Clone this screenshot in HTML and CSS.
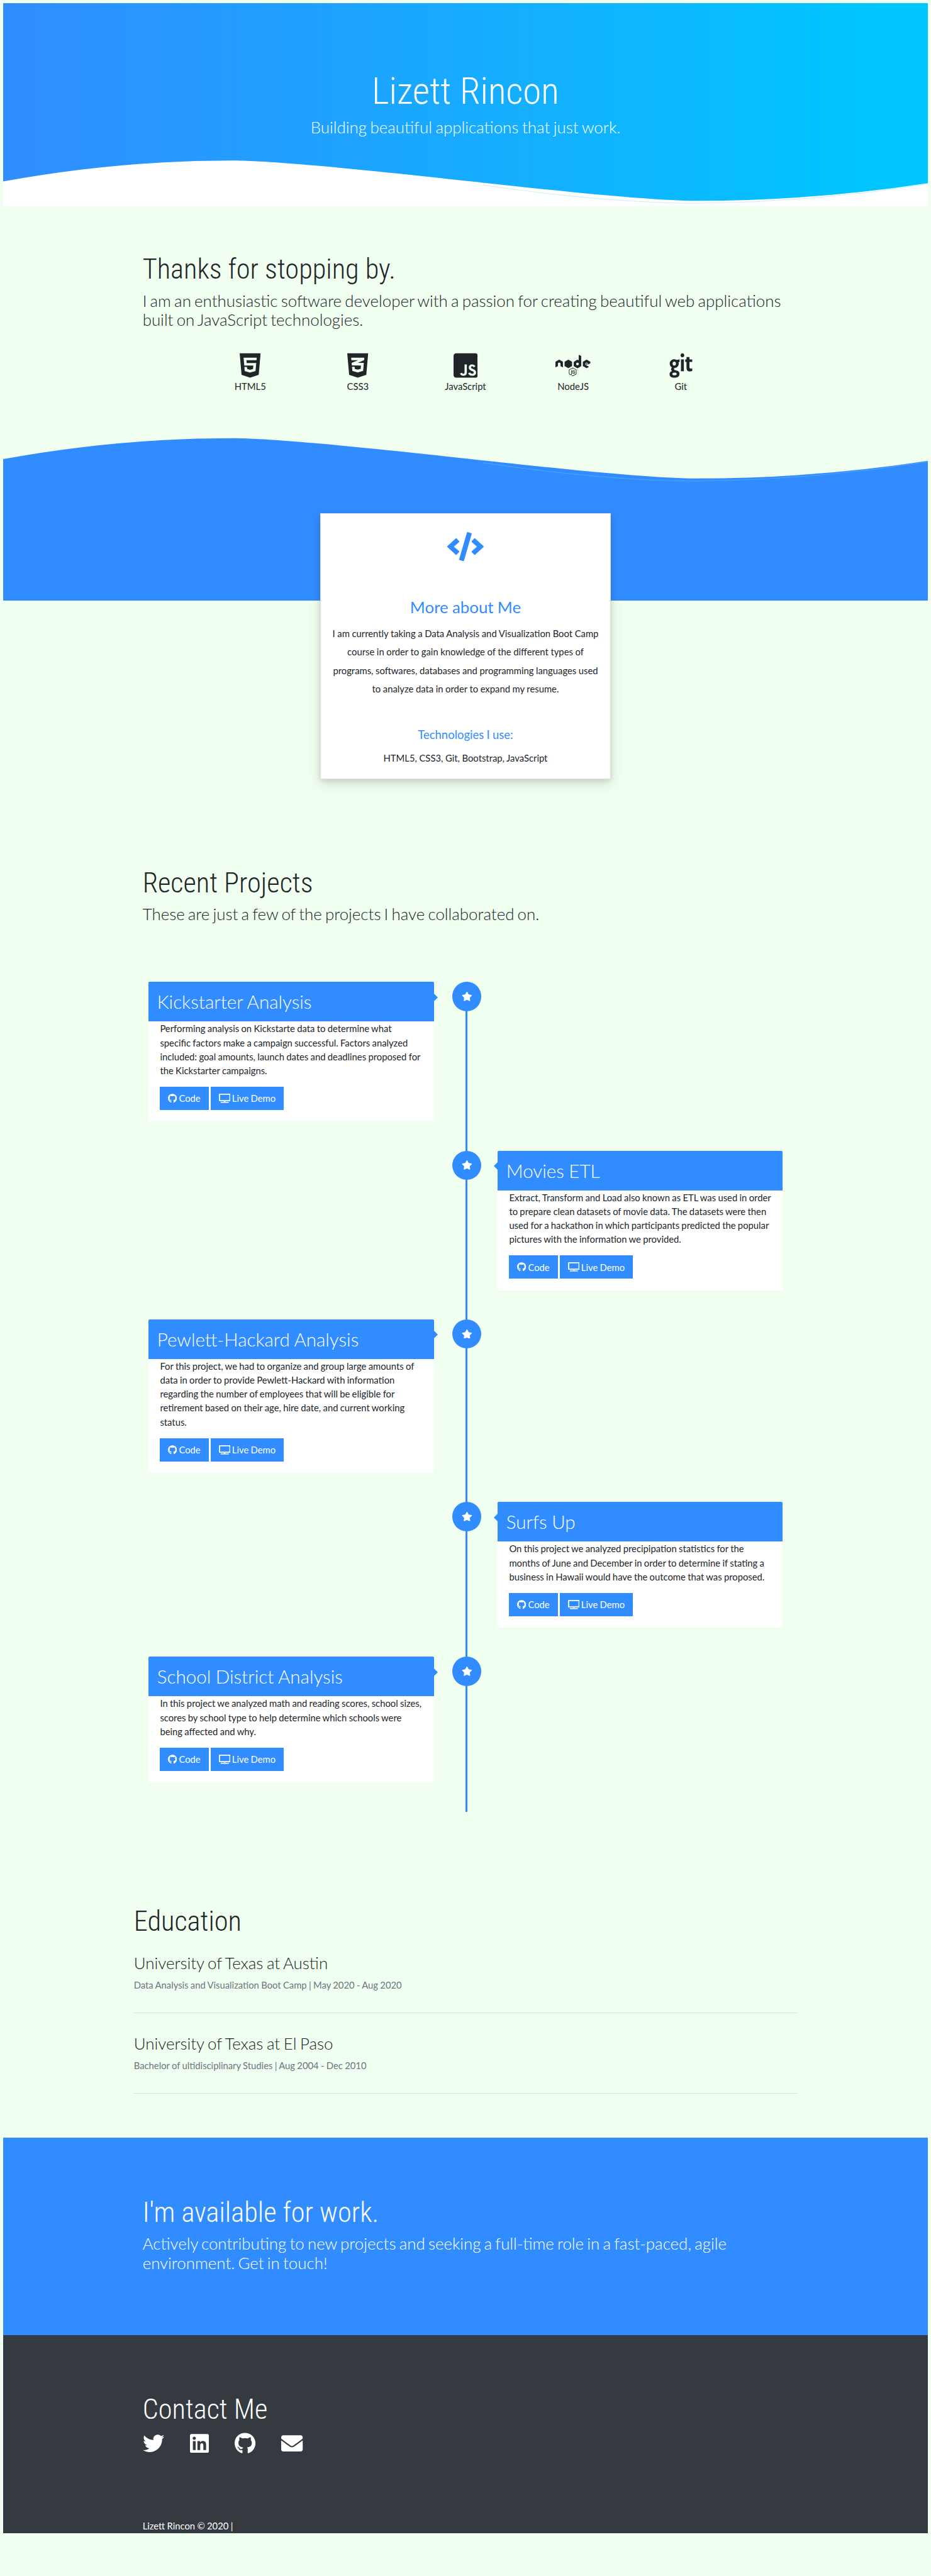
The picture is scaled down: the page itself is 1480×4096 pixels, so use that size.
FILE: index.html
```html
<!DOCTYPE html>
<html lang="en">
<head>
<meta charset="utf-8">
<title>Lizett Rincon</title>
<link rel="stylesheet" href="styles.css">
</head>
<body>
<svg class="sprite" aria-hidden="true">
  <symbol id="star" viewBox="0 0 576 512"><path d="M259.3 17.8L194 150.2 47.9 171.5c-26.2 3.8-36.7 36.1-17.7 54.6l105.7 103-25 145.5c-4.5 26.3 23.2 46 46.4 33.7L288 439.6l130.7 68.7c23.2 12.2 50.9-7.4 46.4-33.7l-25-145.5 105.7-103c19-18.5 8.5-50.8-17.7-54.6L382 150.2 316.7 17.8c-11.7-23.6-45.6-23.9-57.4 0z"/></symbol>
  <symbol id="tv" viewBox="0 0 640 512"><path d="M592 0H48A48 48 0 0 0 0 48v320a48 48 0 0 0 48 48h240v32H112a16 16 0 0 0-16 16v32a16 16 0 0 0 16 16h416a16 16 0 0 0 16-16v-32a16 16 0 0 0-16-16H352v-32h240a48 48 0 0 0 48-48V48a48 48 0 0 0-48-48zm-16 352H64V64h512z"/></symbol>
  <symbol id="github" viewBox="0 0 496 512"><path d="M165.9 397.4c0 2-2.3 3.6-5.2 3.6-3.3.3-5.6-1.3-5.6-3.6 0-2 2.3-3.6 5.2-3.6 3-.3 5.6 1.3 5.6 3.6zm-31.1-4.5c-.7 2 1.3 4.3 4.3 4.9 2.6 1 5.6 0 6.2-2s-1.3-4.3-4.3-5.2c-2.6-.7-5.5.3-6.2 2.3zm44.2-1.7c-2.9.7-4.9 2.6-4.6 4.9.3 2 2.9 3.3 5.9 2.6 2.9-.7 4.9-2.6 4.6-4.6-.3-1.9-3-3.2-5.9-2.9zM244.8 8C106.1 8 0 113.3 0 252c0 110.9 69.8 205.8 169.5 239.2 12.8 2.3 17.3-5.6 17.3-12.1 0-6.2-.3-40.4-.3-61.4 0 0-70 15-84.7-29.8 0 0-11.4-29.1-27.8-36.6 0 0-22.9-15.7 1.6-15.4 0 0 24.9 2 38.6 25.8 21.9 38.6 58.6 27.5 72.9 20.9 2.3-16 8.8-27.1 16-33.7-55.9-6.2-112.3-14.3-112.3-110.5 0-27.5 7.6-41.3 23.6-58.9-2.6-6.5-11.1-33.3 2.6-67.9 20.9-6.5 69 27 69 27 20-5.6 41.5-8.5 62.8-8.5s42.8 2.9 62.8 8.5c0 0 48.1-33.6 69-27 13.7 34.7 5.2 61.4 2.6 67.9 16 17.7 25.8 31.5 25.8 58.9 0 96.5-58.9 104.2-114.8 110.5 9.2 7.9 17 22.9 17 46.4 0 33.7-.3 75.4-.3 83.6 0 6.5 4.6 14.4 17.3 12.1C428.2 457.8 496 362.9 496 252 496 113.3 383.5 8 244.8 8zM97.2 352.9c-1.3 1-1 3.3.7 5.2 1.6 1.6 3.9 2.3 5.2 1 1.3-1 1-3.3-.7-5.2-1.6-1.6-3.9-2.3-5.2-1zm-10.8-8.1c-.7 1.3.3 2.9 2.3 3.9 1.6 1 3.6.7 4.3-.7.7-1.3-.3-2.9-2.3-3.9-2-.6-3.6-.3-4.3.7zm32.4 35.6c-1.6 1.3-1 4.3 1.3 6.2 2.3 2.3 5.2 2.6 6.5 1 1.3-1.3.7-4.3-1.3-6.2-2.2-2.3-5.2-2.6-6.5-1zm-11.4-14.7c-1.6 1-1.6 3.6 0 5.9 1.6 2.3 4.3 3.3 5.6 2.3 1.6-1.3 1.6-3.9 0-6.2-1.4-2.3-4-3.3-5.6-2z"/></symbol>
</svg>

<header class="hero">
  <div class="hero-text">
    <h1 class="display">Lizett Rincon</h1>
    <p class="lead">Building beautiful applications that just work.</p>
  </div>
  <svg class="wave" viewBox="0 0 1590 100" preserveAspectRatio="none">
    <path fill="#fff" d="M0 56.7Q197 20.8 393 20.8C545 20.8 1039 90.1 1191 90.1Q1391 90.1 1590 59.6V100H0Z"/>
    <path class="hero-line" d="M825 63Q1040 94.2 1191 94.2Q1391 93 1590 61"/>
  </svg>
</header>

<section class="intro">
  <div class="container">
    <h2 class="heading">Thanks for stopping by.</h2>
    <p class="lead">I am an enthusiastic software developer with a passion for creating beautiful web applications built on JavaScript technologies.</p>
    <ul class="skills">
      <li class="skill"><svg viewBox="0 0 384 512"><path d="M0 32l34.9 395.8L191.5 480l157.6-52.2L384 32H0zm308.2 127.9H124.4l4.1 49.4h175.6l-13.6 148.4-97.9 27v.3h-1.1l-98.7-27.3-6-75.8h47.7L138 320l53.5 14.5 53.7-14.5 6-62.2H84.3L71.5 112.2h241.1l-4.4 47.7z"/></svg><span>HTML5</span></li>
      <li class="skill"><svg viewBox="0 0 384 512"><path d="M0 32l34.9 395.8L192 480l157.1-52.2L384 32H0zm313.1 80l-4.8 47.3L193 208.6l-.3.1h111.5l-12.8 146.6-98.2 28.7-98.8-29.2-6.4-73.9h48.9l3.2 38.3 52.6 13.3 54.7-15.4 3.7-61.6-166.3-.5v-.1l-.2.1-3.6-46.3L193.1 162l6.5-2.7H76.7L70.9 112h242.2z"/></svg><span>CSS3</span></li>
      <li class="skill"><svg viewBox="0 0 448 512"><path d="M400 32H48C21.5 32 0 53.5 0 80v352c0 26.5 21.5 48 48 48h352c26.5 0 48-21.5 48-48V80c0-26.5-21.5-48-48-48zM243.8 381.4c0 43.6-25.6 63.5-62.9 63.5-33.7 0-53.2-17.4-63.2-38.5l34.3-20.7c6.6 11.7 12.6 21.6 27.1 21.6 13.8 0 22.6-5.4 22.6-26.5V237.7h42.1v143.7zm99.6 63.5c-39.1 0-64.4-18.6-76.7-43l34.3-19.8c9 14.7 20.8 25.6 41.5 25.6 17.4 0 28.6-8.7 28.6-20.8 0-14.4-11.4-19.5-30.7-28l-10.5-4.5c-30.4-12.9-50.5-29.2-50.5-63.5 0-31.6 24.1-55.6 61.6-55.6 26.8 0 46 9.3 59.8 33.7L368 290c-7.2-12.9-15-18-27.1-18-12.3 0-20.1 7.8-20.1 18 0 12.6 7.8 17.7 25.9 25.6l10.5 4.5c35.8 15.3 55.9 31 55.9 66.2 0 37.8-29.8 58.6-69.7 58.6z"/></svg><span>JavaScript</span></li>
      <li class="skill"><svg viewBox="0 0 640 512"><path d="M316.3 452c-2.1 0-4.2-.6-6.1-1.6L291 439c-2.9-1.6-1.5-2.2-.5-2.5 3.8-1.3 4.6-1.6 8.7-4 .4-.2 1-.1 1.4.1l14.8 8.8c.5.3 1.3.3 1.8 0L375 408c.5-.3.9-.9.9-1.6v-66.7c0-.7-.3-1.3-.9-1.6l-57.8-33.3c-.5-.3-1.2-.3-1.8 0l-57.8 33.3c-.6.3-.9 1-.9 1.6v66.7c0 .6.4 1.2.9 1.5l15.8 9.1c8.6 4.3 13.9-.8 13.9-5.8v-65.9c0-.9.7-1.7 1.7-1.7h7.3c.9 0 1.7.7 1.7 1.7v65.9c0 11.5-6.2 18-17.1 18-3.3 0-6 0-13.3-3.6l-15.2-8.7c-3.7-2.2-6.1-6.2-6.1-10.5v-66.7c0-4.3 2.3-8.4 6.1-10.5l57.8-33.4c3.7-2.1 8.5-2.1 12.1 0l57.8 33.4c3.7 2.2 6.1 6.2 6.1 10.5v66.7c0 4.3-2.3 8.4-6.1 10.5l-57.8 33.4c-1.7 1.1-3.8 1.7-6 1.7zm46.7-65.8c0-12.5-8.4-15.8-26.2-18.2-18-2.4-19.8-3.6-19.8-7.8 0-3.5 1.5-8.1 14.8-8.1 11.9 0 16.3 2.6 18.1 10.6.2.8.8 1.3 1.6 1.3h7.5c.5 0 .9-.2 1.2-.5.3-.4.5-.8.4-1.3-1.2-13.8-10.3-20.2-28.8-20.2-16.5 0-26.3 7-26.3 18.6 0 12.7 9.8 16.1 25.6 17.7 18.9 1.9 20.4 4.6 20.4 8.3 0 6.5-5.2 9.2-17.4 9.2-15.3 0-18.7-3.8-19.8-11.4-.1-.8-.8-1.4-1.7-1.4h-7.5c-.9 0-1.7.7-1.7 1.7 0 9.7 5.3 21.3 30.6 21.3 18.5 0 29-7.2 29-19.8zm54.5-50.1c0 6.1-5 11.1-11.1 11.1s-11.1-5-11.1-11.1c0-6.3 5.2-11.1 11.1-11.1 6-.1 11.1 4.8 11.1 11.1zm-1.8 0c0-5.2-4.2-9.3-9.4-9.3-5.1 0-9.3 4.1-9.3 9.3 0 5.2 4.2 9.4 9.3 9.4 5.2-.1 9.4-4.3 9.4-9.4zM137.3 191c0-2.7-1.4-5.1-3.7-6.4l-61.3-35.3c-1-.6-2.2-.9-3.4-1h-.6c-1.2 0-2.3.4-3.4 1L3.7 184.6C1.4 185.9 0 188.4 0 191l.1 95c0 1.3.7 2.5 1.8 3.2 1.1.7 2.5.7 3.7 0L42 268.3c2.3-1.4 3.7-3.8 3.7-6.4v-44.4c0-2.6 1.4-5.1 3.7-6.4l15.5-8.9c1.2-.7 2.4-1 3.7-1 1.3 0 2.6.3 3.7 1l15.5 8.9c2.3 1.3 3.7 3.8 3.7 6.4v44.4c0 2.6 1.4 5.1 3.7 6.4l36.4 20.9c1.1.7 2.6.7 3.7 0 1.1-.6 1.8-1.9 1.8-3.2l.2-95zM472.5 87.3v176.4c0 2.6-1.4 5.1-3.7 6.4l-61.3 35.4c-2.3 1.3-5.1 1.3-7.4 0l-61.3-35.4c-2.3-1.3-3.7-3.8-3.7-6.4v-70.8c0-2.6 1.4-5.1 3.7-6.4l61.3-35.4c2.3-1.3 5.1-1.3 7.4 0l15.3 8.8c1.7 1 3.9-.3 3.9-2.2v-94c0-2.8 3-4.6 5.5-3.2l36.5 20.4c2.3 1.2 3.8 3.7 3.8 6.4zm-46 128.9c0-.7-.4-1.3-.9-1.6l-21-12.2c-.6-.3-1.3-.3-1.9 0l-21 12.2c-.6.3-.9.9-.9 1.6v24.3c0 .7.4 1.3.9 1.6l21 12.1c.6.3 1.3.3 1.8 0l21-12.1c.6-.3.9-.9.9-1.6v-24.3zm209.8-.7c2.3-1.3 3.7-3.8 3.7-6.4V192c0-2.6-1.4-5.1-3.7-6.4l-60.9-35.4c-2.3-1.3-5.1-1.3-7.4 0l-61.3 35.4c-2.3 1.3-3.7 3.8-3.7 6.4v70.8c0 2.7 1.4 5.1 3.7 6.4l60.9 34.7c2.2 1.3 5 1.3 7.3 0l36.8-20.5c2.5-1.4 2.5-5 0-6.4L550 241.6c-1.2-.7-1.9-1.9-1.9-3.2v-22.2c0-1.3.7-2.5 1.9-3.2l19.2-11.1c1.1-.7 2.6-.7 3.7 0l19.2 11.1c1.1.7 1.9 1.9 1.9 3.2v17.4c0 2.8 3.1 4.6 5.6 3.2l36.7-21.3zM559 219c-.4.3-.7.7-.7 1.2v13.6c0 .5.3 1 .7 1.2l11.8 6.8c.4.3 1 .3 1.4 0L584 235c.4-.3.7-.7.7-1.2v-13.6c0-.5-.3-1-.7-1.2l-11.8-6.8c-.4-.3-1-.3-1.4 0L559 219zm-254.2 43.5v-70.4c0-2.6-1.6-5.1-3.9-6.4l-61.1-35.2c-2.1-1.2-5-1.4-7.4 0l-61.1 35.2c-2.3 1.3-3.9 3.7-3.9 6.4v70.4c0 2.8 1.9 5.2 4 6.4l61.2 35.2c2.4 1.4 5.2 1.3 7.4 0l61-35.2c1.8-1 3.1-2.7 3.6-4.7.1-.5.2-1.1.2-1.7z"/></svg><span>NodeJS</span></li>
      <li class="skill"><svg viewBox="0 0 448 512"><path d="M18.8 221.7c0 25.3 16.2 60 41.5 68.5v1c-18.8 8.3-24 50.6 1 65.8v1C34 367 16 384.4 16 414.2c0 51.5 48.8 65.8 91.5 65.8 52 0 90.7-18.7 90.7-76 0-70.5-101-44.5-101-82.8 0-13.5 7.2-18.7 19.7-21.3 41.5-7.7 67.5-40 67.5-82.2 0-7.3-1.5-14.2-4-21 6.7-1.5 13.2-3.3 19.7-5.5v-50.5c-17.2 6.8-35.7 11.8-54.5 11.8-53.8-31-126.8 1.3-126.8 69.2zm87.7 163.8c17 0 41.2 3 41.2 25 0 21.8-19.5 26.3-37.7 26.3-17.3 0-43.3-2.7-43.3-25.2.1-22.3 22.1-26.1 39.8-26.1zM103.3 256c-22 0-31.3-13-31.3-33.8 0-49.3 61-48.7 61-.5 0 20.3-8 34.3-29.7 34.3zM432 305.5v49c-13.3 7.3-30.5 9.8-45.5 9.8-53.5 0-59.8-42.2-59.8-85.7v-87.7h.5v-1c-7 0-7.3-1.6-24 1v-47.5h24c0-22.3.3-31-1.5-41.2h56.7c-2 13.8-1.5 27.5-1.5 41.2h51v47.5s-19.3-1-51-1V281c0 14.8 3.3 32.8 21.8 32.8 9.8 0 21.3-2.8 29.3-8.3zM286 68.7c0 18.7-14.5 36.2-33.8 36.2-19.8 0-34.5-17.2-34.5-36.2 0-19.3 14.5-36.7 34.5-36.7C272 32 286 50 286 68.7zm-6.2 74.5c-1.8 14.6-1.6 199.8 0 217.8h-55.5c1.6-18.1 1.8-203 0-217.8h55.5z"/></svg><span>Git</span></li>
    </ul>
  </div>
</section>

<section class="about">
  <svg class="wave" viewBox="0 0 1590 100" preserveAspectRatio="none">
    <path class="wave-blue" d="M0 48.7Q197 12.7 393 12.7C545 12.7 1039 82 1191 82Q1391 82 1590 51.5V101H0Z"/>
    <path class="about-line" d="M825 55Q1040 86.4 1191 86.4Q1391 85 1590 53"/>
  </svg>
  <div class="about-band">
    <article class="card">
      <svg class="card-icon" viewBox="0 0 640 512"><path d="M278.9 511.5l-61-17.7c-6.4-1.8-10-8.5-8.2-14.9L346.2 8.7c1.8-6.4 8.5-10 14.9-8.2l61 17.7c6.4 1.8 10 8.5 8.2 14.9L293.8 503.3c-1.9 6.4-8.5 10.1-14.9 8.2zm-114-112.2l43.5-46.4c4.6-4.9 4.3-12.7-.8-17.2L117 256l90.6-79.7c5.1-4.5 5.5-12.3.8-17.2l-43.5-46.4c-4.5-4.8-12.1-5.1-17-.5L3.8 247.2c-5.1 4.7-5.1 12.8 0 17.5l144.1 135.1c4.9 4.6 12.5 4.4 17-.5zm327.2.6l144.1-135.1c5.1-4.7 5.1-12.8 0-17.5L492.1 112.1c-4.8-4.5-12.4-4.3-17 .5L431.6 159c-4.6 4.9-4.3 12.7.8 17.2L523 256l-90.6 79.7c-5.1 4.5-5.5 12.3-.8 17.2l43.5 46.4c4.5 4.9 12.1 5.1 17 .6z"/></svg>
      <h3 class="card-title">More about Me</h3>
      <p class="card-text">I am currently taking a Data Analysis and Visualization Boot Camp course in order to gain knowledge of the different types of programs, softwares, databases and programming languages used to analyze data in order to expand my resume.</p>
      <h4 class="card-subtitle">Technologies I use:</h4>
      <p class="card-text">HTML5, CSS3, Git, Bootstrap, JavaScript</p>
    </article>
  </div>
</section>

<section class="projects">
  <div class="container">
    <h2 class="heading">Recent Projects</h2>
    <p class="lead">These are just a few of the projects I have collaborated on.</p>
    <div class="timeline">
      <div class="entry">
        <span class="badge"><svg><use href="#star"/></svg></span>
        <article class="panel">
          <h3 class="panel-title">Kickstarter Analysis</h3>
          <div class="panel-body">
            <p>Performing analysis on Kickstarte data to determine what specific factors make a campaign successful. Factors analyzed included: goal amounts, launch dates and deadlines proposed for the Kickstarter campaigns.</p>
            <div class="buttons"><a class="btn"><svg class="gh"><use href="#github"/></svg>Code</a><a class="btn"><svg class="tv"><use href="#tv"/></svg>Live Demo</a></div>
          </div>
        </article>
      </div>
      <div class="entry right">
        <span class="badge"><svg><use href="#star"/></svg></span>
        <article class="panel">
          <h3 class="panel-title">Movies ETL</h3>
          <div class="panel-body">
            <p>Extract, Transform and Load also known as ETL was used in order to prepare clean datasets of movie data. The datasets were then used for a hackathon in which participants predicted the popular pictures with the information we provided.</p>
            <div class="buttons"><a class="btn"><svg class="gh"><use href="#github"/></svg>Code</a><a class="btn"><svg class="tv"><use href="#tv"/></svg>Live Demo</a></div>
          </div>
        </article>
      </div>
      <div class="entry">
        <span class="badge"><svg><use href="#star"/></svg></span>
        <article class="panel">
          <h3 class="panel-title">Pewlett-Hackard Analysis</h3>
          <div class="panel-body">
            <p>For this project, we had to organize and group large amounts of data in order to provide Pewlett-Hackard with information regarding the number of employees that will be eligible for retirement based on their age, hire date, and current working status.</p>
            <div class="buttons"><a class="btn"><svg class="gh"><use href="#github"/></svg>Code</a><a class="btn"><svg class="tv"><use href="#tv"/></svg>Live Demo</a></div>
          </div>
        </article>
      </div>
      <div class="entry right">
        <span class="badge"><svg><use href="#star"/></svg></span>
        <article class="panel">
          <h3 class="panel-title">Surfs Up</h3>
          <div class="panel-body">
            <p>On this project we analyzed precipipation statistics for the months of June and December in order to determine if stating a business in Hawaii would have the outcome that was proposed.</p>
            <div class="buttons"><a class="btn"><svg class="gh"><use href="#github"/></svg>Code</a><a class="btn"><svg class="tv"><use href="#tv"/></svg>Live Demo</a></div>
          </div>
        </article>
      </div>
      <div class="entry">
        <span class="badge"><svg><use href="#star"/></svg></span>
        <article class="panel">
          <h3 class="panel-title">School District Analysis</h3>
          <div class="panel-body">
            <p>In this project we analyzed math and reading scores, school sizes, scores by school type to help determine which schools were being affected and why.</p>
            <div class="buttons"><a class="btn"><svg class="gh"><use href="#github"/></svg>Code</a><a class="btn"><svg class="tv"><use href="#tv"/></svg>Live Demo</a></div>
          </div>
        </article>
      </div>
    </div>
  </div>
</section>

<section class="education">
  <h2 class="heading">Education</h2>
  <div class="school">
    <h3 class="lead">University of Texas at Austin</h3>
    <p class="degree">Data Analysis and Visualization Boot Camp | May 2020 - Aug 2020</p>
  </div>
  <div class="school">
    <h3 class="lead">University of Texas at El Paso</h3>
    <p class="degree">Bachelor of ultidisciplinary Studies | Aug 2004 - Dec 2010</p>
  </div>
</section>

<section class="hire">
  <div class="container">
    <h2 class="heading">I'm available for work.</h2>
    <p class="lead">Actively contributing to new projects and seeking a full-time role in a fast-paced, agile environment. Get in touch!</p>
  </div>
</section>

<footer class="footer">
  <div class="container footer-inner">
    <div>
      <h2 class="heading">Contact Me</h2>
      <div class="social">
        <svg viewBox="0 0 512 512"><path d="M459.37 151.716c.325 4.548.325 9.097.325 13.645 0 138.72-105.583 298.558-298.558 298.558-59.452 0-114.68-17.219-161.137-47.106 8.447.974 16.568 1.299 25.34 1.299 49.055 0 94.213-16.568 130.274-44.832-46.132-.975-84.792-31.188-98.112-72.772 6.498.974 12.995 1.624 19.818 1.624 9.421 0 18.843-1.3 27.614-3.573-48.081-9.747-84.143-51.98-84.143-102.985v-1.299c13.969 7.797 30.214 12.67 47.431 13.319-28.264-18.843-46.781-51.005-46.781-87.391 0-19.492 5.197-37.36 14.294-52.954 51.655 63.675 129.3 105.258 216.365 109.807-1.624-7.797-2.599-15.918-2.599-24.04 0-57.828 46.782-104.934 104.934-104.934 30.213 0 57.502 12.67 76.67 33.137 23.715-4.548 46.456-13.32 66.599-25.34-7.798 24.366-24.366 44.833-46.132 57.827 21.117-2.273 41.584-8.122 60.426-16.243-14.292 20.791-32.161 39.308-52.628 54.253z"/></svg>
        <svg viewBox="0 0 448 512"><path d="M416 32H31.9C14.3 32 0 46.5 0 64.3v383.4C0 465.5 14.3 480 31.9 480H416c17.6 0 32-14.5 32-32.3V64.3c0-17.8-14.4-32.3-32-32.3zM135.4 416H69V202.2h66.5V416zm-33.2-243c-21.3 0-38.5-17.3-38.5-38.5S80.9 96 102.2 96c21.2 0 38.5 17.3 38.5 38.5 0 21.3-17.2 38.5-38.5 38.5zm282.1 243h-66.4V312c0-24.8-.5-56.7-34.5-56.7-34.6 0-39.9 27-39.9 54.9V416h-66.4V202.2h63.7v29.2h.9c8.9-16.8 30.6-34.5 62.9-34.5 67.2 0 79.7 44.3 79.7 101.9V416z"/></svg>
        <svg viewBox="0 0 496 512"><use href="#github"/></svg>
        <svg viewBox="0 0 512 512"><path d="M502.3 190.8c3.9-3.1 9.7-.2 9.7 4.7V400c0 26.5-21.5 48-48 48H48c-26.5 0-48-21.5-48-48V195.6c0-5 5.7-7.8 9.7-4.7 22.4 17.4 52.1 39.5 154.1 113.6 21.1 15.4 56.7 47.8 92.2 47.6 35.7.3 72-32.8 92.3-47.6 102-74.1 131.6-96.3 154-113.7zM256 320c23.2.4 56.6-29.2 73.4-41.4 132.7-96.3 142.8-104.7 173.4-128.7 5.8-4.5 9.2-11.5 9.2-18.9v-19c0-26.5-21.5-48-48-48H48c-26.5 0-48 21.5-48 48v19c0 7.4 3.4 14.3 9.2 18.9 30.6 23.9 40.7 32.4 173.4 128.7 16.8 12.2 50.2 41.8 73.4 41.4z"/></svg>
      </div>
    </div>
    <p class="copyright">Lizett Rincon © 2020 |</p>
  </div>
</footer>
</body>
</html>
```
FILE: styles.css
```css
:root {
  --blue: #318dff;
  --ink: #212529;
}

* { box-sizing: border-box; margin: 0; padding: 0; }

html { font-size: 9.25px; background: #f0fff0; }

body {
  margin: .5rem;
  font-family: Lato, "Open Sans", sans-serif;
  font-size: 1.6rem;
  line-height: 2.4rem;
  word-spacing: -.05rem;
  color: var(--ink);
}

svg { display: block; fill: currentColor; }
.sprite { display: none; }

.container { width: 114rem; margin: 0 auto; padding: 0 1.5rem; }

.heading, .display {
  font-family: "Roboto Condensed", Roboto, sans-serif;
  font-stretch: 75%;
  font-weight: 300;
  font-size: 4.8rem;
  line-height: 5.8rem;
  word-spacing: normal;
}
.display { font-size: 6.4rem; line-height: 7.6rem; }

.lead { font-size: 2.8rem; font-weight: 300; line-height: 3.3rem; word-spacing: -.2rem; }

.wave { width: 100%; height: 10rem; }

/* Hero */
.hero {
  height: 35rem;
  display: flex;
  flex-direction: column;
  justify-content: space-between;
  text-align: center;
  color: #fff;
  background: linear-gradient(to right, #318dff, #00c6ff 95%);
}
.hero-text { padding-top: 11.4rem; }
.hero-text .lead { margin-top: .7rem; word-spacing: -.16rem; }
.hero-line { fill: none; stroke: #17a9ff; stroke-opacity: .3; stroke-width: .8; }

/* Intro */
.intro { height: 38.5rem; padding-top: 8rem; }
.intro .lead, .projects .lead, .hire .lead { margin-top: .7rem; }
.skills { display: flex; justify-content: center; list-style: none; margin-top: 3.8rem; }
.skill { width: 18.5rem; display: flex; flex-direction: column; align-items: center; }
.skill svg { height: 4.8rem; }

/* About */
.wave-blue { fill: var(--blue); }
.about-line { fill: none; stroke: #fff; stroke-opacity: .25; stroke-width: .8; }
.about-band { height: 19.2rem; padding-top: 4.2rem; background: var(--blue); }
.card {
  width: 50rem;
  height: 45.8rem;
  margin: 0 auto;
  padding: 3.2rem 1.6rem 0;
  text-align: center;
  background: #fff;
  border: 1px solid rgba(0, 0, 0, .125);
  box-shadow: 0 .4rem .8rem rgba(0, 0, 0, .08), 0 .6rem 2rem rgba(0, 0, 0, .15);
}
.card-icon { height: 5rem; margin: 0 auto; color: var(--blue); }
.card-title { margin-top: 6.15rem; font-size: 2.8rem; font-weight: 400; line-height: 3.4rem; color: var(--blue); }
.card-text { margin-top: 1.25rem; line-height: 3.2rem; word-spacing: -.02rem; }
.card-subtitle { margin-top: 5rem; font-size: 2rem; font-weight: 400; line-height: 2.4rem; color: var(--blue); }

/* Projects */
.projects { padding-top: 45.8rem; }
.timeline {
  position: relative;
  margin-top: 10rem;
}
.timeline::before {
  content: "";
  position: absolute;
  top: 0;
  bottom: 0;
  left: 55.5rem;
  width: .3rem;
  background: var(--blue);
}
.entry { display: flex; padding: 0 1rem 5rem; }
.entry.right { justify-content: flex-end; }
.badge {
  position: absolute;
  left: 53.2rem;
  width: 5rem;
  height: 5rem;
  display: flex;
  align-items: center;
  justify-content: center;
  border-radius: 50%;
  color: #fff;
  background: var(--blue);
}
.badge svg { width: 1.8rem; height: 1.6rem; }
.panel { position: relative; width: 49.1rem; background: #fff; border-radius: .2rem; }
.right .panel { width: 49rem; }
.panel::after {
  content: "";
  position: absolute;
  top: 2rem;
  left: 100%;
  border: .7rem solid transparent;
  border-right: 0;
  border-left-color: var(--blue);
}
.right .panel::after {
  left: auto;
  right: 100%;
  border: .7rem solid transparent;
  border-left: 0;
  border-right-color: var(--blue);
}
.panel-title {
  padding: 1.5rem 1.5rem;
  font-size: 3.2rem;
  font-weight: 300;
  line-height: 3.8rem;
  color: #fff;
  background: var(--blue);
  border-radius: .2rem .2rem 0 0;
}
.panel-body { padding: 0 1.9rem 2rem 2rem; }
.right .panel-body { padding-right: 1.4rem; }
.buttons { display: flex; gap: .33rem; margin-top: 1.6rem; }
.btn { display: flex; align-items: center; gap: .3rem; height: 4rem; padding: 0 1.4rem; color: #fff; background: var(--blue); }
.btn .gh { width: 1.55rem; height: 1.6rem; }
.btn .tv { width: 2rem; height: 1.6rem; }

/* Education */
.education { width: 114rem; height: 56.1rem; margin: 0 auto; padding-top: 16rem; }
.school { height: 13.8rem; border-bottom: 1px solid rgba(0, 0, 0, .1); }
.school .lead { padding-top: 3.5rem; line-height: 3.4rem; word-spacing: -.15rem; }
.heading + .school { height: 12.9rem; }
.heading + .school .lead { padding-top: 2.6rem; }
.degree { margin-top: .8rem; color: #6c757d; }

/* Hire me */
.hire { height: 33.9rem; padding-top: 10rem; color: #fff; background: var(--blue); }

/* Footer */
.footer { height: 34rem; padding-top: 9.9rem; color: #fff; background: #343a40; }
.footer-inner { height: 100%; display: flex; flex-direction: column; justify-content: space-between; }
.social { display: flex; gap: 4.45rem; margin-top: 1.1rem; }
.social svg { height: 3.7rem; }
.copyright { line-height: 2.4rem; }
```
